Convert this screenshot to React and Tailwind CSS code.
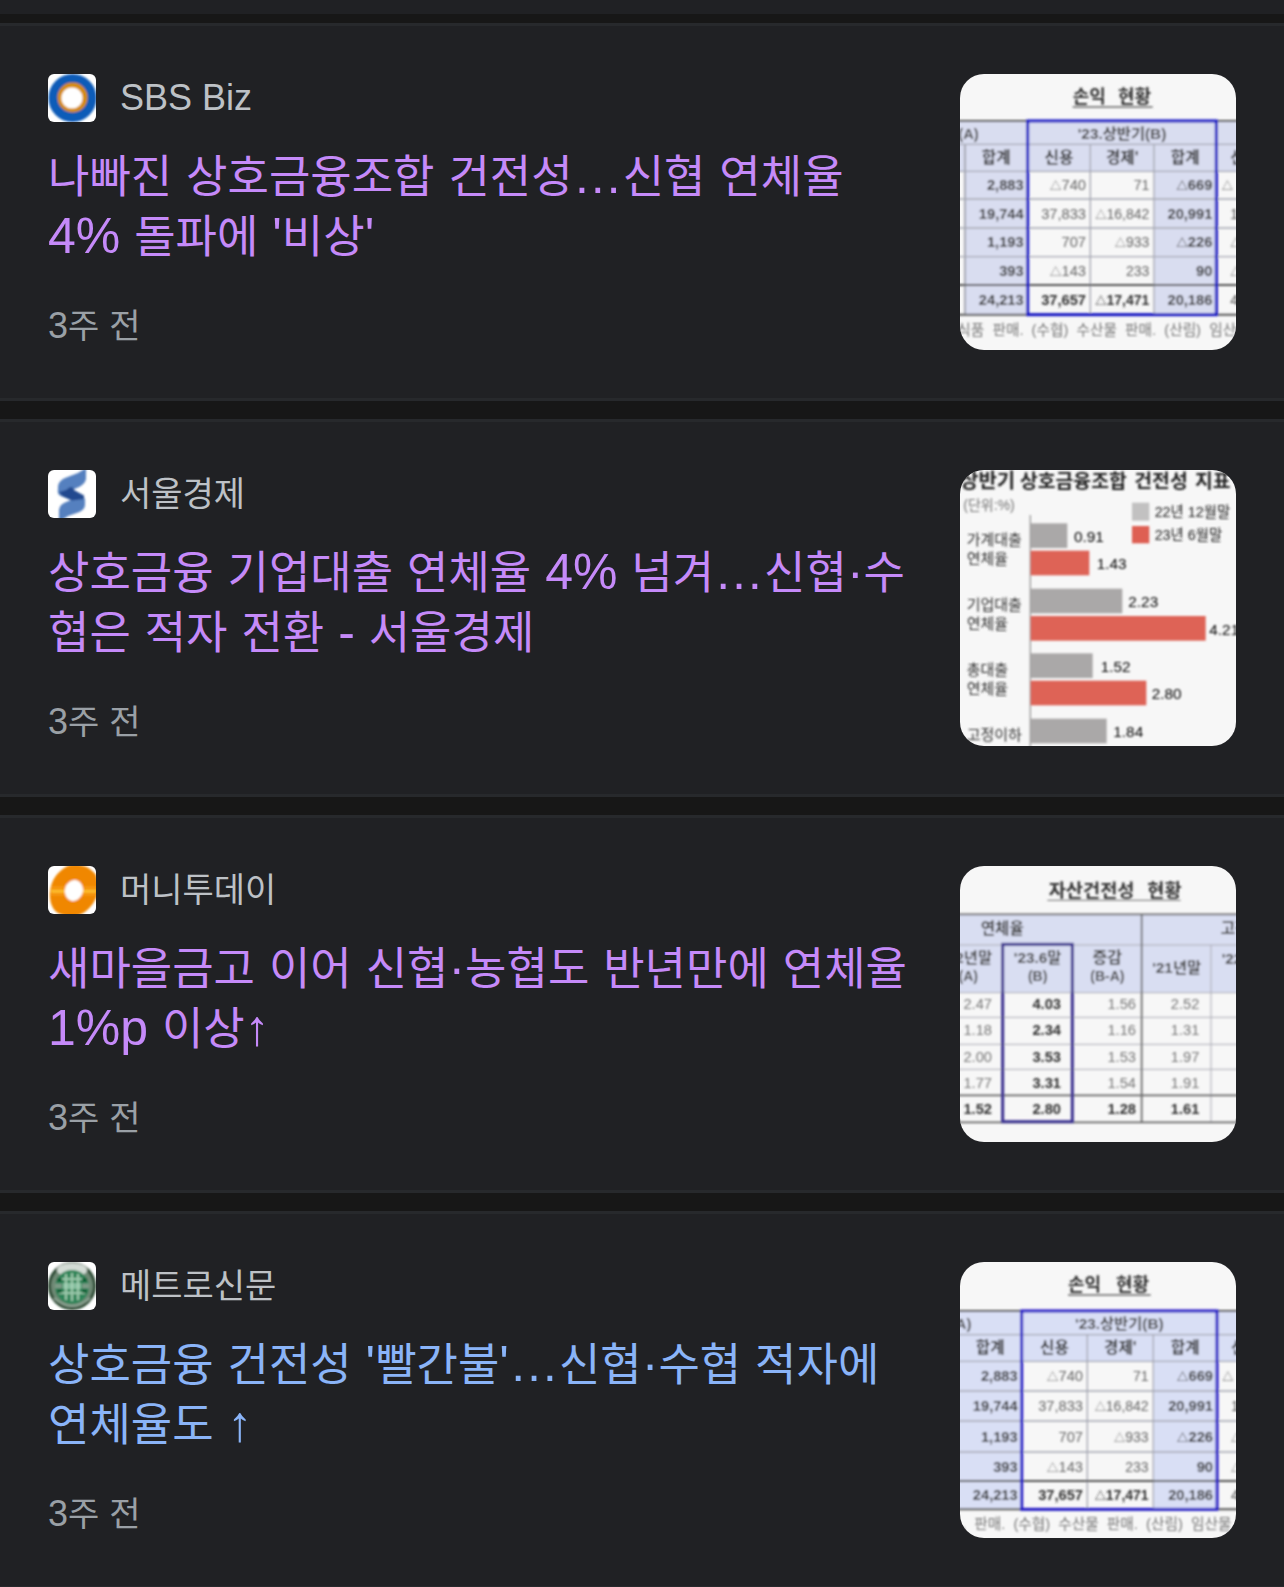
import React from 'react';

const KR = '"Liberation Sans", "Noto Sans CJK KR", sans-serif';

/* Latin runs (letters, digits, punctuation, spaces) are set slightly larger than Hangul. */
function Mixed({ text, latin }) {
  const runs = text.match(/[가-힣]+|[^가-힣]+/g) || [];
  return runs.map((run, i) =>
    /[가-힣]/.test(run) ? (
      run
    ) : (
      <span key={i} className={latin}>
        {run}
      </span>
    )
  );
}

function T({ x, y, s = 44, a = 'end', b = false, c = '#333', children }) {
  const tri = typeof children === 'string' && children.startsWith('△');
  return (
    <text x={x} y={y} fontSize={s} textAnchor={a} fontWeight={b ? 700 : 400} fill={c}>
      {tri ? (
        <>
          <tspan fontSize={s * 0.8}>△</tspan>
          {children.slice(1)}
        </>
      ) : (
        children
      )}
    </text>
  );
}

function Thumb({ children, blur }) {
  const id = React.useId();
  return (
    <svg
      viewBox="30 30 828 828"
      className="size-[276px] shrink-0 rounded-3xl"
      fontFamily={KR}
      aria-hidden="true"
    >
      <filter id={id} x="-5%" y="-5%" width="110%" height="110%">
        <feGaussianBlur stdDeviation={blur} />
      </filter>
      <rect x="30" y="30" width="828" height="828" fill="#f7f7f7" />
      <g filter={`url(#${id})`}>{children}</g>
    </svg>
  );
}

const PROFIT_ROWS = [
  ['2,883', '△740', '71', '△669', '△'],
  ['19,744', '37,833', '△16,842', '20,991', '1'],
  ['1,193', '707', '△933', '△226', '△'],
  ['393', '△143', '233', '90', '△'],
  ['24,213', '37,657', '△17,471', '20,186', '4'],
];

function ProfitTable({ cols, rows, title, note, noteX, head, headX, fill, box, firstCol }) {
  const [c1, c2, c3, c4] = cols;
  const bottom = rows[7];
  return (
    <>
      <T x={title[0]} y={118} s={54} a="start" b c="#333">손익</T>
      <T x={title[1]} y={118} s={54} a="start" b c="#333">현황</T>
      <path d={`M${title[0]} 129H${title[1] + 104}`} stroke="#666" strokeWidth="4" />
      <rect x="0" y={rows[0]} width="900" height={rows[2] - rows[0]} fill={fill} />
      <rect x={firstCol} y={rows[0]} width={c1 - firstCol} height={bottom - rows[0]} fill={fill} />
      <rect x={c3} y={rows[0]} width={c4 - c3} height={bottom - rows[0]} fill={fill} />
      <g stroke="#a5a7b2" strokeWidth="4">
        {rows.slice(1, 6).map((y) => (
          <path key={y} d={`M0 ${y}H900`} />
        ))}
        <path d={`M${c2} ${rows[1]}V${bottom}M${c3} ${rows[1]}V${bottom}`} />
        {firstCol > 30 && <path d={`M${firstCol} ${rows[1]}V${bottom}`} strokeWidth="6" />}
      </g>
      <path d={`M0 ${rows[0]}H900M0 ${rows[6]}H900M0 ${bottom}H900`} stroke="#555" strokeWidth="6" />
      <rect x={c1} y={rows[0]} width={c4 - c1} height={bottom - rows[0]} fill="none" stroke={box} strokeWidth="9" />
      <T x={headX} y={rows[0] + 54} s={44} b c="#444">{head}</T>
      <T x={(c1 + c4) / 2} y={rows[0] + 54} s={46} a="middle" b c="#444">'23.상반기(B)</T>
      <T x={c1 - 51} y={rows[1] + 56} s={47} b>합계</T>
      <T x={(c1 + c2) / 2} y={rows[1] + 56} s={47} a="middle" b>신용</T>
      <T x={(c2 + c3) / 2} y={rows[1] + 56} s={47} a="middle" b>경제'</T>
      <T x={(c3 + c4) / 2} y={rows[1] + 56} s={47} a="middle" b>합계</T>
      <T x={c4 + 42} y={rows[1] + 56} s={47} a="start" b>신용</T>
      {PROFIT_ROWS.map((r, i) => {
        const y = (rows[i + 2] + rows[i + 3]) / 2 + 15;
        const last = i === 4;
        return (
          <React.Fragment key={i}>
            <T x={c1 - 12} y={y} s={44} b>{r[0]}</T>
            <T x={c2 - 13} y={y} s={44} b={last} c={last ? '#333' : '#666'}>{r[1]}</T>
            <T x={c3 - 14} y={y} s={42} b={last} c={last ? '#333' : '#666'}>{r[2]}</T>
            <T x={c4 - 12} y={y} s={44} b>{r[3]}</T>
            <T x={i === 0 ? c4 + 16 : c4 + 42} y={y} s={42} a="start" c="#555">{r[4]}</T>
          </React.Fragment>
        );
      })}
      <T x={noteX} y={bottom + 60} s={44} a="start" c="#777">{note}</T>
    </>
  );
}

function ProfitThumbA() {
  return (
    <Thumb blur="2.6">
      <ProfitTable
        cols={[233, 421, 612, 799]}
        rows={[171, 241, 322, 405, 492, 578, 663, 752]}
        title={[368, 504]}
        head="(A)"
        headX={86}
        firstCol={45}
        fill="#d9ddf0"
        box="#1713c4"
        noteX={22}
        note={'식품\u00a0 판매.\u00a0 (수협)\u00a0 수산물\u00a0 판매.\u00a0 (산림)\u00a0 임산'}
      />
    </Thumb>
  );
}

function ProfitThumbB() {
  return (
    <Thumb blur="2.6">
      <ProfitTable
        cols={[215, 412, 610, 801]}
        rows={[177, 248, 328, 417, 507, 600, 687, 772]}
        title={[354, 498]}
        head="A)"
        headX={64}
        firstCol={0}
        fill="#d9dff5"
        box="#261bc6"
        noteX={36}
        note={',\u00a0 판매.\u00a0 (수협)\u00a0 수산물\u00a0 판매.\u00a0 (산림)\u00a0 임산물'}
      />
    </Thumb>
  );
}

const BARS = [
  [190, 352, '#aaa8a8', '0.91', 372],
  [272, 418, '#de6457', '1.43', 440],
  [386, 517, '#aaa8a8', '2.23', 535],
  [468, 767, '#de6457', '4.21', 778],
  [580, 428, '#aaa8a8', '1.52', 452],
  [662, 589, '#de6457', '2.80', 605],
  [776, 470, '#aaa8a8', '1.84', 490],
];

function ChartThumb() {
  return (
    <Thumb blur="2.6">
      <T x={30} y={83} s={60} a="start" b c="#222">상반기</T>
      <T x={210} y={83} s={58} a="start" b c="#222">상호금융조합</T>
      <T x={553} y={83} s={58} a="start" b c="#222">건전성</T>
      <T x={735} y={83} s={58} a="start" b c="#222">지표</T>
      <T x={40} y={150} s={42} a="start" c="#777">(단위:%)</T>
      <rect x="546" y="128" width="52" height="54" fill="#c2c1c1" />
      <rect x="546" y="198" width="52" height="52" fill="#de5f52" />
      <T x={614} y={171} s={43} a="start" c="#222">22년 12월말</T>
      <T x={614} y={241} s={43} a="start" c="#222">23년 6월말</T>
      <path d="M241 165V870" stroke="#999" strokeWidth="4" />
      {BARS.map(([y, end, color, value, x]) => (
        <React.Fragment key={y}>
          <rect x="242" y={y} width={end - 242} height="74" fill={color} />
          <T x={x} y={y + 56} s={46} a="start" c="#000">{value}</T>
        </React.Fragment>
      ))}
      {[
        [256, '가계대출'],
        [313, '연체율'],
        [451, '기업대출'],
        [508, '연체율'],
        [645, '총대출'],
        [703, '연체율'],
        [840, '고정이하'],
      ].map(([y, label]) => (
        <T key={y} x={50} y={y} s={45} a="start" c="#333">{label}</T>
      ))}
    </Thumb>
  );
}

const SOUND_ROWS = [
  ['2.47', '4.03', '1.56', '2.52'],
  ['1.18', '2.34', '1.16', '1.31'],
  ['2.00', '3.53', '1.53', '1.97'],
  ['1.77', '3.31', '1.54', '1.91'],
  ['1.52', '2.80', '1.28', '1.61'],
];

function SoundnessThumb() {
  return (
    <Thumb blur="2.8">
      <T x={296} y={124} s={56} a="start" b c="#333">자산건전성</T>
      <T x={592} y={124} s={56} a="start" b c="#333">현황</T>
      <path d="M292 133H692" stroke="#888" strokeWidth="4" />
      <rect x="0" y="176" width="900" height="234" fill="#d9def2" />
      <g stroke="#aaabb5" strokeWidth="3">
        <path d="M0 267H900M0 410H900M0 484H900M0 565H900M0 640H900M783 267V800" />
      </g>
      <path d="M0 175H900M575 175V800M0 718H900M0 799H900" stroke="#666" strokeWidth="5" />
      <rect x="158" y="265" width="209" height="532" fill="none" stroke="#3a3190" strokeWidth="9" />
      <T x={92} y={235} s={47} a="start" b c="#444">연체율</T>
      <T x={812} y={235} s={47} a="start" b c="#444">고정</T>
      <T x={126} y={322} s={46} b c="#444">'22년말</T>
      <T x={84} y={376} s={42} b c="#444">(A)</T>
      <T x={263} y={322} s={46} a="middle" b c="#444">'23.6말</T>
      <T x={263} y={376} s={42} a="middle" b c="#444">(B)</T>
      <T x={472} y={322} s={48} a="middle" b c="#444">증감</T>
      <T x={472} y={376} s={42} a="middle" b c="#444">(B-A)</T>
      <T x={680} y={352} s={46} a="middle" b c="#444">'21년말</T>
      <T x={815} y={324} s={46} a="start" b c="#444">'22</T>
      {SOUND_ROWS.map((r, i) => {
        const y = 459 + i * 79;
        const last = i === 4;
        const c = last ? '#333' : '#777';
        return (
          <React.Fragment key={i}>
            <T x={126} y={y} b={last} c={c}>{r[0]}</T>
            <T x={333} y={y} b>{r[1]}</T>
            <T x={558} y={y} b={last} c={c}>{r[2]}</T>
            <T x={748} y={y} b={last} c={c}>{r[3]}</T>
          </React.Fragment>
        );
      })}
    </Thumb>
  );
}

function Favicon({ blur, children }) {
  const id = React.useId();
  return (
    <svg viewBox="0 0 48 48" className="size-12 shrink-0 rounded-md" aria-hidden="true">
      <filter id={id} x="-20%" y="-20%" width="140%" height="140%">
        <feGaussianBlur stdDeviation={blur} />
      </filter>
      <rect width="48" height="48" fill="#fff" />
      <g filter={`url(#${id})`}>{children}</g>
    </svg>
  );
}

function SbsIcon() {
  return (
    <Favicon blur="0.9">
      <circle cx="24.5" cy="24" r="24" fill="#0b5cb8" />
      <circle cx="24.5" cy="23.5" r="15" fill="#d68c08" />
      <circle cx="24" cy="24" r="10.6" fill="#fff" />
    </Favicon>
  );
}

function SedailyIcon() {
  return (
    <Favicon blur="0.9">
      <path
        d="M38 -2V8C38 12 35 15 31 17L22 21L32 25C36 26.500 37.500 28 37 32V35C36.500 39 34 41 30 42.500L20 46L11 52V41C11 37 13 34 17 32.500L23 30L13 26C10 25 9.500 22 10 19V17C10.500 12 13 10 17 8L30 3Z"
        fill="#5580bf"
      />
      <path d="M11 22L18 20L22 17L25 17.500L26 20L36 25.500V29L24 30.500L14 26Z" fill="#24498f" />
    </Favicon>
  );
}

function MtIcon() {
  return (
    <Favicon blur="0.8">
      <path
        d="M22 -1C30 -3 42 0 48 9L52 24L47 34C43 42 36 48 28 50C18 51 8 48 5 42C1 35 1 25 4 17C7 9 14 2 22 -1Z"
        fill="#f08705"
      />
      <rect x="3" y="20" width="46" height="10" fill="#f79a08" opacity="0.7" />
      <rect x="3" y="24" width="46" height="2.500" fill="#ffc22e" />
      <ellipse cx="26" cy="24.500" rx="9" ry="10.500" transform="rotate(15 26 24)" fill="#fff" />
    </Favicon>
  );
}

function MetroIcon() {
  return (
    <Favicon blur="1">
      <circle cx="24" cy="24" r="24" fill="#2c4a32" />
      <circle cx="24" cy="24" r="21" fill="#6f8a76" />
      <ellipse cx="24" cy="8" rx="15" ry="7" fill="#d3dcd5" />
      <circle cx="24" cy="25" r="17" fill="#2f8458" />
      <g fill="none" stroke="#9bc9ac" strokeWidth="2.200">
        <path d="M18 12V38M24 11V39M30 12V38M11 17H37M11 31H37" />
      </g>
      <rect x="15" y="21" width="18" height="6" fill="#a8d6ba" opacity="0.7" />
      <path d="M7 24H14M34 24H41" stroke="#7d9a86" strokeWidth="5" />
      <path d="M9 18h5M34 18h5M9 29h5M34 29h5" stroke="#0b6338" strokeWidth="4" />
      <path d="M6 36Q24 52 42 36" fill="none" stroke="#8fa595" strokeWidth="2" />
    </Favicon>
  );
}

const ARTICLES = [
  {
    source: 'SBS Biz',
    Icon: SbsIcon,
    title: "나빠진 상호금융조합 건전성…신협 연체율 4% 돌파에 '비상'",
    Picture: ProfitThumbA,
    visited: true,
  },
  {
    source: '서울경제',
    Icon: SedailyIcon,
    title: '상호금융 기업대출 연체율 4% 넘겨…신협·수협은 적자 전환 - 서울경제',
    Picture: ChartThumb,
    visited: true,
  },
  {
    source: '머니투데이',
    Icon: MtIcon,
    title: '새마을금고 이어 신협·농협도 반년만에 연체율 1%p 이상↑',
    Picture: SoundnessThumb,
    visited: true,
  },
  {
    source: '메트로신문',
    Icon: MetroIcon,
    title: "상호금융 건전성 '빨간불'…신협·수협 적자에 연체율도 ↑",
    Picture: ProfitThumbB,
    visited: false,
  },
];

function Article({ source, Icon, title, Picture, visited }) {
  return (
    <article className="border-y-[3px] border-[#27292c] bg-[#202124] p-12 last:border-b">
      <a href="#" className="flex items-stretch gap-12">
        <div className="flex min-w-0 flex-1 flex-col">
          <div className="flex items-center gap-6 text-[34px] leading-[48px] text-[#bdc1c6]">
            <Icon />
            <span>
              <Mixed text={source} latin="text-4xl leading-none" />
            </span>
          </div>
          <h3
            className={
              visited
                ? 'mt-[26px] text-[45px] leading-[60px] text-[#c58af9]'
                : 'mt-[26px] text-[45px] leading-[60px] text-[#8ab4f8]'
            }
          >
            <Mixed text={title} latin="text-[50px] leading-none" />
          </h3>
          <time className="mt-auto text-[34px] leading-[48px] text-[#9aa0a6]">
            <Mixed text="3주 전" latin="text-4xl leading-none" />
          </time>
        </div>
        <Picture />
      </a>
    </article>
  );
}

export default function App() {
  return (
    <div
      lang="ko"
      className="min-h-screen bg-[#171717] font-['Liberation_Sans','Noto_Sans_CJK_KR',sans-serif]"
    >
      <div className="h-3.5 bg-[#202124]" />
      <main className="mt-[9px] flex flex-col gap-[18px]">
        {ARTICLES.map((a) => (
          <Article key={a.source} {...a} />
        ))}
      </main>
    </div>
  );
}
